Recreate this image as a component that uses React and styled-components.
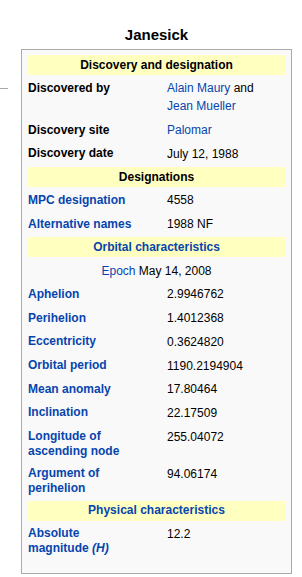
import styled, { createGlobalStyle } from 'styled-components';

const GlobalStyle = createGlobalStyle`
  body {
    margin: 0;
    background: #fff;
    font-family: "Liberation Sans", Arial, sans-serif;
    color: #000;
  }
`;

const Page = styled.div`
  display: flex;
  align-items: flex-start;
  padding-top: 25px;
`;

const SideRule = styled.div`
  width: 8px;
  height: 1px;
  margin-top: 63px;
  margin-right: 13px;
  background: #a9a9a9;
`;

const Panel = styled.div`
  width: 271px;
  display: flex;
  flex-direction: column;
`;

const Title = styled.div`
  font-size: 15px;
  font-weight: bold;
  line-height: 19px;
  text-align: center;
  padding-bottom: 5px;
`;

const Infobox = styled.div`
  display: grid;
  grid-template-columns: 136px 1fr;
  gap: 3px;
  padding: 5px 6px 15px;
  border: 1px solid #aaa;
  background: #f9f9f9;
  font-size: 12px;
`;

const Section = styled.div`
  display: contents;
`;

const Header = styled.div`
  grid-column: 1 / -1;
  padding: 1.5px 0;
  line-height: 17px;
  background: #ffffc0;
  text-align: center;
  font-weight: bold;
  color: ${p => (p.$link ? '#0645ad' : '#000')};
`;

const Note = styled.div`
  grid-column: 1 / -1;
  padding: 1.35px 0;
  line-height: 18px;
  text-align: center;
`;

const Label = styled.div`
  padding: 2.85px 26px 1.35px 0;
  line-height: 15px;
  font-weight: bold;
  color: ${p => (p.$link ? '#0645ad' : '#000')};
`;

const Value = styled.div`
  padding: 1.35px 0;
  line-height: 18px;
`;

const Link = styled.span`
  color: #0645ad;
`;

const sections = [
  {
    title: 'Discovery and designation',
    rows: [
      {
        label: 'Discovered by',
        value: (
          <>
            <Link>Alain Maury</Link> and
            <br />
            <Link>Jean Mueller</Link>
          </>
        ),
      },
      { label: 'Discovery site', value: <Link>Palomar</Link> },
      { label: 'Discovery date', value: 'July 12, 1988' },
    ],
  },
  {
    title: 'Designations',
    rows: [
      { label: 'MPC designation', link: true, value: '4558' },
      { label: 'Alternative names', link: true, value: '1988 NF' },
    ],
  },
  {
    title: 'Orbital characteristics',
    link: true,
    note: (
      <>
        <Link>Epoch</Link> May 14, 2008
      </>
    ),
    rows: [
      { label: 'Aphelion', link: true, value: '2.9946762' },
      { label: 'Perihelion', link: true, value: '1.4012368' },
      { label: 'Eccentricity', link: true, value: '0.3624820' },
      { label: 'Orbital period', link: true, value: '1190.2194904' },
      { label: 'Mean anomaly', link: true, value: '17.80464' },
      { label: 'Inclination', link: true, value: '22.17509' },
      { label: 'Longitude of ascending node', link: true, value: '255.04072' },
      { label: 'Argument of perihelion', link: true, value: '94.06174' },
    ],
  },
  {
    title: 'Physical characteristics',
    link: true,
    rows: [
      {
        label: (
          <>
            Absolute magnitude <i>(H)</i>
          </>
        ),
        link: true,
        value: '12.2',
      },
    ],
  },
];

export default function App() {
  return (
    <Page>
      <GlobalStyle />
      <SideRule />
      <Panel>
        <Title>Janesick</Title>
        <Infobox>
          {sections.map(section => (
            <Section key={section.title}>
              <Header $link={section.link}>{section.title}</Header>
              {section.note && <Note>{section.note}</Note>}
              {section.rows.map((row, i) => (
                <Section key={i}>
                  <Label $link={row.link}>{row.label}</Label>
                  <Value>{row.value}</Value>
                </Section>
              ))}
            </Section>
          ))}
        </Infobox>
      </Panel>
    </Page>
  );
}
